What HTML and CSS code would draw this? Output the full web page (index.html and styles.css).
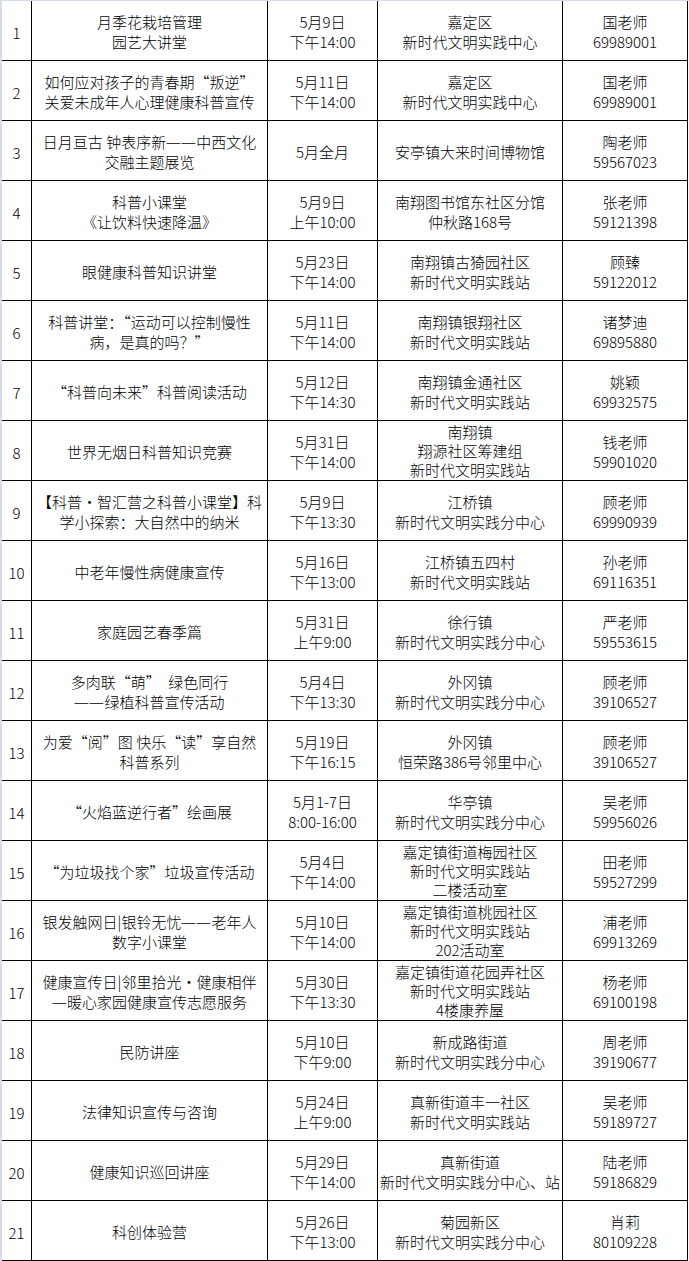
FILE: index.html
```html
<!DOCTYPE html>
<html lang="zh-CN">
<head>
<meta charset="utf-8">
<title>科普活动安排</title>
<link rel="stylesheet" href="styles.css">
</head>
<body>
<div class="page">
  <div class="sheet">
    <div class="c n">1</div><div class="c">月季花栽培管理<br>园艺大讲堂</div><div class="c">5月9日<br>下午14:00</div><div class="c">嘉定区<br>新时代文明实践中心</div><div class="c">国老师<br>69989001</div>
    <div class="c n">2</div><div class="c">如何应对孩子的青春期“叛逆”<br>关爱未成年人心理健康科普宣传</div><div class="c">5月11日<br>下午14:00</div><div class="c">嘉定区<br>新时代文明实践中心</div><div class="c">国老师<br>69989001</div>
    <div class="c n">3</div><div class="c"><div>日月亘古 钟表序新<span class="d">—</span><span class="d">—</span>中西文化<br>交融主题展览</div></div><div class="c">5月全月</div><div class="c">安亭镇大来时间博物馆</div><div class="c">陶老师<br>59567023</div>
    <div class="c n">4</div><div class="c">科普小课堂<br>《让饮料快速降温》</div><div class="c">5月9日<br>上午10:00</div><div class="c">南翔图书馆东社区分馆<br>仲秋路168号</div><div class="c">张老师<br>59121398</div>
    <div class="c n">5</div><div class="c">眼健康科普知识讲堂</div><div class="c">5月23日<br>下午14:00</div><div class="c">南翔镇古猗园社区<br>新时代文明实践站</div><div class="c">顾臻<br>59122012</div>
    <div class="c n">6</div><div class="c">科普讲堂：“运动可以控制慢性<br>病，是真的吗？”</div><div class="c">5月11日<br>下午14:00</div><div class="c">南翔镇银翔社区<br>新时代文明实践站</div><div class="c">诸梦迪<br>69895880</div>
    <div class="c n">7</div><div class="c">“科普向未来”科普阅读活动</div><div class="c">5月12日<br>下午14:30</div><div class="c">南翔镇金通社区<br>新时代文明实践站</div><div class="c">姚颖<br>69932575</div>
    <div class="c n">8</div><div class="c">世界无烟日科普知识竞赛</div><div class="c">5月31日<br>下午14:00</div><div class="c three">南翔镇<br>翔源社区筹建组<br>新时代文明实践站</div><div class="c">钱老师<br>59901020</div>
    <div class="c n">9</div><div class="c">【科普·智汇营之科普小课堂】科<br>学小探索：大自然中的纳米</div><div class="c">5月9日<br>下午13:30</div><div class="c">江桥镇<br>新时代文明实践分中心</div><div class="c">顾老师<br>69990939</div>
    <div class="c n">10</div><div class="c">中老年慢性病健康宣传</div><div class="c">5月16日<br>下午13:00</div><div class="c">江桥镇五四村<br>新时代文明实践站</div><div class="c">孙老师<br>69116351</div>
    <div class="c n">11</div><div class="c">家庭园艺春季篇</div><div class="c">5月31日<br>上午9:00</div><div class="c">徐行镇<br>新时代文明实践分中心</div><div class="c">严老师<br>59553615</div>
    <div class="c n">12</div><div class="c"><div>多肉联“萌”　绿色同行<br><span class="d">—</span><span class="d">—</span>绿植科普宣传活动</div></div><div class="c">5月4日<br>下午13:30</div><div class="c">外冈镇<br>新时代文明实践分中心</div><div class="c">顾老师<br>39106527</div>
    <div class="c n">13</div><div class="c">为爱“阅”图 快乐“读”享自然<br>科普系列</div><div class="c">5月19日<br>下午16:15</div><div class="c">外冈镇<br>恒荣路386号邻里中心</div><div class="c">顾老师<br>39106527</div>
    <div class="c n">14</div><div class="c">“火焰蓝逆行者”绘画展</div><div class="c">5月1-7日<br>8:00-16:00</div><div class="c">华亭镇<br>新时代文明实践分中心</div><div class="c">吴老师<br>59956026</div>
    <div class="c n">15</div><div class="c">“为垃圾找个家”垃圾宣传活动</div><div class="c">5月4日<br>下午14:00</div><div class="c three">嘉定镇街道梅园社区<br>新时代文明实践站<br>二楼活动室</div><div class="c">田老师<br>59527299</div>
    <div class="c n">16</div><div class="c"><div>银发触网日|银铃无忧<span class="d">—</span><span class="d">—</span>老年人<br>数字小课堂</div></div><div class="c">5月10日<br>下午14:00</div><div class="c three">嘉定镇街道桃园社区<br>新时代文明实践站<br>202活动室</div><div class="c">浦老师<br>69913269</div>
    <div class="c n">17</div><div class="c"><div>健康宣传日|邻里拾光·健康相伴<br><span class="d">—</span>暖心家园健康宣传志愿服务</div></div><div class="c">5月30日<br>下午13:30</div><div class="c three">嘉定镇街道花园弄社区<br>新时代文明实践站<br>4楼康养屋</div><div class="c">杨老师<br>69100198</div>
    <div class="c n">18</div><div class="c">民防讲座</div><div class="c">5月10日<br>下午9:00</div><div class="c">新成路街道<br>新时代文明实践分中心</div><div class="c">周老师<br>39190677</div>
    <div class="c n">19</div><div class="c">法律知识宣传与咨询</div><div class="c">5月24日<br>上午9:00</div><div class="c">真新街道丰一社区<br>新时代文明实践站</div><div class="c">吴老师<br>59189727</div>
    <div class="c n">20</div><div class="c">健康知识巡回讲座</div><div class="c">5月29日<br>下午14:00</div><div class="c">真新街道<br>新时代文明实践分中心、站</div><div class="c">陆老师<br>59186829</div>
    <div class="c n">21</div><div class="c">科创体验营</div><div class="c">5月26日<br>下午13:00</div><div class="c">菊园新区<br>新时代文明实践分中心</div><div class="c">肖莉<br>80109228</div>
  </div>
</div>
</body>
</html>
```

FILE: styles.css
```css
html, body {
  margin: 0;
  padding: 0;
  background: #ffffff;
}

.page {
  border-left: 2px solid #d4dcea;
  border-top: 1px solid #d4dcea;
  width: 687px;
  height: 1260px;
  overflow: hidden;
  background: #ffffff;
}

.sheet {
  display: grid;
  grid-template-columns: 30px 236px 110px 185px 125px;
  grid-auto-rows: 60px;
  font-family: "Noto Sans CJK SC", "Noto Sans", sans-serif;
  font-size: 15px;
  font-weight: 300;
  line-height: 20px;
  color: #000000;
}

.c {
  box-sizing: border-box;
  border-right: 1px solid #000000;
  border-bottom: 1px solid #000000;
  display: flex;
  align-items: center;
  justify-content: center;
  text-align: center;
  padding-top: 2px;
  white-space: nowrap;
  overflow: visible;
}

.n {
  padding-top: 4px;
}

.three {
  line-height: 19px;
  padding-top: 0;
}

.d {
  display: inline-block;
  width: 15px;
  text-align: center;
  transform: scaleX(1.15);
}
```
